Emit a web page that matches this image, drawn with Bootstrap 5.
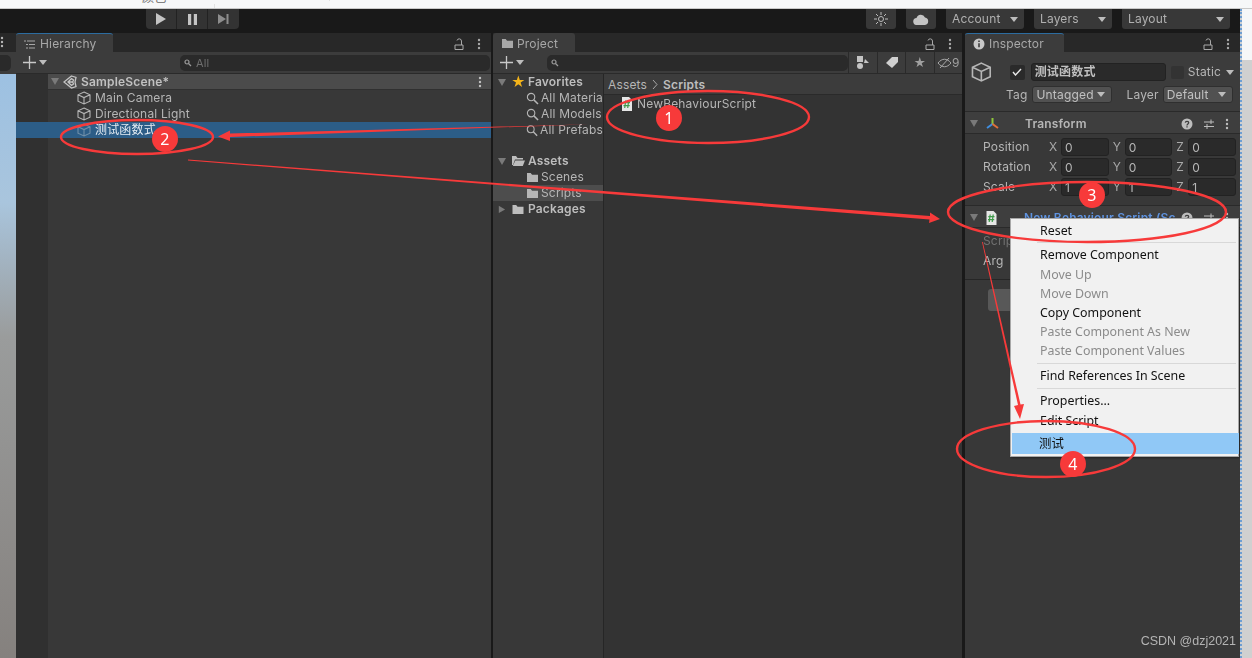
<!DOCTYPE html>
<html lang="en">
<head>
<meta charset="utf-8">
<title>Unity Editor</title>
<link href="https://cdn.jsdelivr.net/npm/bootstrap@5.3.0/dist/css/bootstrap.min.css" rel="stylesheet">
<style>
html,body{margin:0;height:100%;background:#191919;overflow:hidden}
.ue-app{width:1252px;height:658px;position:relative;overflow:hidden;font:12px/16px Inter,"Noto Sans CJK SC",sans-serif;letter-spacing:.17px;color:#b6b6b6;filter:blur(.45px)}
.ue-top{height:9px;background:#f6f7f8;border-bottom:1px solid #c8c8c8;overflow:hidden;color:#666;line-height:12px;padding-left:142px}
.ue-top span{display:block;margin-top:-8px;width:188px;height:9px;border-right:1px solid #e2e2e2}
.ue-top em{display:block;height:9px;width:73px;border-right:1px solid #e2e2e2}
.ue-bar{height:24px;background:#191919;padding-right:22px}
.ue-play{margin-left:146px;height:20px;background:#333;border-radius:0 0 4px 4px;display:flex}
.ue-play i{width:31px;display:flex;align-items:center;justify-content:center;border-right:1px solid #222}
.ue-tb{height:20px;background:#383838;border-radius:0 0 3px 3px;color:#b0b0b0;display:flex;align-items:center;padding:0 6px}
.ue-w30{width:30px;justify-content:center;margin-right:10px}
.ue-w78{width:78px;margin-right:10px}
.ue-w108{width:108px}
.caret-d{width:0;height:0;border:4px solid transparent;border-top:5px solid #bdbdbd;border-bottom:0;margin-left:auto;flex:none}
.caret-g{border-top-color:#7a7a7a;border-left-width:4.500px;border-right-width:4.500px;border-top-width:7px;margin:0}
.ue-panes{height:625px}
.ue-scene{width:16px;background:#282828}
.ue-scene-tab{height:19px;padding-top:3px}
.ue-scene-tool{height:22px;background:#3c3c3c;padding-top:3px}
.ue-scene-tool div{width:11px;height:16px;background:#2a2a2a;border-radius:0 5px 5px 0}
.ue-scene-view{flex:1;background:linear-gradient(#9dc1e2 0,#a9c5dd 22%,#9a9c9c 45%,#85817e 100%)}
.ue-hier{width:475px;margin-right:2px}
.ue-proj{width:469px;margin-right:3px}
.ue-insp{width:275px}
.ue-hier,.ue-proj,.ue-insp{background:#383838;display:flex;flex-direction:column}
.ue-tabs{height:19px;background:#282828;flex:none;color:#a8a8a8}
.ue-tab{height:19px;background:#3c3c3c;display:flex;align-items:center;padding-top:2px;border-radius:3px 3px 0 0}
.ue-tab.on{border-top:1px solid #2c6ca0}
.w97{width:97px;padding-left:8px;gap:5px}.w82{width:82px;padding-left:8px;gap:3px}.w99{width:99px;padding-left:8px;gap:4px}
.ue-tools{height:22px;background:#3c3c3c;flex:none;border-bottom:1px solid #2a2a2a;align-items:center}
.ue-plus{width:32px;padding-left:7px;display:flex;align-items:center;gap:3px;flex:none}
.ue-search{height:16px;background:#2a2a2a;border-radius:5px;display:flex;align-items:center;padding-left:4px;color:#6f6f6f;gap:4px;font-size:11px}
.ue-s1{margin-left:132px;width:310px}
.ue-s2{margin-left:22px;width:301px}
.ue-gutter{width:32px;background:#303030;flex:none}
.ue-row{height:16px;display:flex;align-items:center;white-space:nowrap}
.ue-scn{background:#4b4b4b;font-weight:600;color:#c0c0c0;padding-left:3px;gap:4px;border-bottom:1px solid #303030}
.ue-scn .dot-end{margin:0 9px 0 auto}
.ue-ind{padding-left:29px;gap:4px}
.ue-sel{background:#2c5d87;color:#e4ecf3;margin-left:-32px;padding-left:61px}
.ue-sel svg{color:#6f8ea8}
.ue-tree{width:111px;flex:none;border-right:1px solid #262626;overflow:hidden}
.ue-tree .ue-row{padding-left:5px}
.ue-tree .sub{padding-left:33px;gap:2px}
.ue-tree .act{background:#4d4d4d}
.ue-tree .ue-bold .ti{margin:0 3px 0 5px;flex:none}
.ue-tree .ue-pk .ti{margin:0 3px 0 4px}
.ue-bold{font-weight:600;color:#bdbdbd}
.ue-star{color:#f4b41a;font-size:14px;width:13px;margin:0 4px 0 5px;line-height:14px;letter-spacing:0}
.ue-tri{width:9px;font-size:8px;color:#7a7a7a;flex:none}
.ue-spacer{height:15px}
.ue-files{flex:1;background:#333}
.ue-crumb{height:21px;background:#3c3c3c;display:flex;align-items:center;padding:1px 0 0 4px;gap:5px;border-bottom:1px solid #2a2a2a}
.ue-file{padding-left:17px;height:18px;gap:4px;display:flex;align-items:center}
.ue-ic-btns{width:114px;display:flex;height:21px;flex:none}
.ue-ic-btns i{flex:1;display:flex;align-items:center;justify-content:center;border-left:1px solid #2a2a2a;font-style:normal;color:#a0a0a0}
.ue-head{height:60px;border-bottom:1px solid #2a2a2a;flex:none;background:#3c3c3c;position:relative}
.ue-r1{height:28px;padding-left:6px;margin-top:6px}
.ue-r2{height:17px;padding-left:41px}
.ue-fld{background:#2a2a2a;border-radius:3px;height:18px;border:1px solid #222;display:flex;align-items:center;padding-left:3px;color:#c0c0c0;font-weight:700;width:137px;margin:0 5px 0 1px}
.ue-chk{width:15px;height:15px;background:#2a2a2a;border-radius:2px;display:flex;align-items:center;justify-content:center;flex:none;margin:0 5px 0 18px}
.ue-chk2{width:13px;height:13px;background:#333;margin:0 4px 0 0}
.ue-static-car{margin:0 6px 0 5px}
.ue-drop{height:17px;background:#515151;border-radius:3px;display:flex;align-items:center;padding:0 6px 0 3px;color:#c0c0c0;border:1px solid #2f2f2f}
.ue-untag{width:80px}.ue-def{width:70px}
.ue-tag{margin-right:5px}
.ue-lay{margin:0 4px 0 14px}
.ue-h1{height:22px;padding:2px 0 0 5px;background:#3e3e3e;display:flex;align-items:center;border-bottom:1px solid #2a2a2a;flex:none}
.ue-h1 .ci{margin-left:7px}
.ue-h1 b{margin-left:25px;font-weight:600}
.ue-h1 b.ue-blue{margin-left:26px;color:#5f93e0}
.ue-h1-ic{margin-left:auto;display:flex;align-items:center;gap:10px;padding-right:11px;color:#bdbdbd}
.ue-gap4{height:3px}
.ue-gap3{height:3px}
.ue-end{height:9px;border-bottom:1px solid #2a2a2a}
.ue-prop{height:20px;display:flex;align-items:center;padding-left:18px}
.ue-prop>span:first-child{width:66px;flex:none}
.ue-dim{color:#727272}
.ue-ax{width:12px;flex:none;color:#a8a8a8}
.ue-num{width:48px;height:18px;background:#2a2a2a;border-radius:3px;border:1px solid #222;padding-left:3px;line-height:17px;margin-right:4px}
.ue-sep{height:1px;background:#262626;margin-top:8px}
.ue-fbtn{width:60px;height:22px;background:#585858;border-radius:3px;margin:9px 0 0 23px}
.ue-right{flex:1;background:#d0d0d0;border-left:2px dotted #6d9ed2;margin-top:-24px;position:relative}
.ue-right::before{content:"";position:absolute;top:0;left:0;right:0;height:51px;background:#f6f7f8}
.ue-menu{position:absolute;left:1010px;top:218px;width:229px;height:239px;margin:0;padding:0;background:#f1f1f1;border:1px solid #a8a8a8;border-radius:0;font:12.400px/19px "Noto Sans","Noto Sans CJK SC",sans-serif;letter-spacing:0;min-width:0;display:block;box-shadow:1px 1px 2px rgba(0,0,0,.4)}
.ue-menu .dropdown-item{padding:0 0 0 29px;color:#111;height:19.200px;line-height:19px;background:none}
.ue-menu .ue-first{margin-top:1.500px}
.ue-menu .dropdown-item.disabled{color:#8b8b8b}
.ue-menu .dropdown-divider{margin:2.400px 2px 2.400px 26px;border-color:#d8d8d8;opacity:1}
.ue-menu .dropdown-item.hot{background:#90c8f6;margin:3.500px 1px 0;padding-left:27px;height:21px;line-height:22px}
.ue-over{position:absolute;left:0;top:0;pointer-events:none;z-index:1001}
.ue-mark{position:absolute;right:16px;bottom:9px;color:#b4b4b4;font:12.500px/16px "Liberation Sans",sans-serif;letter-spacing:0;z-index:1002}
.ue-hicons{margin-left:auto;display:flex;gap:13px;padding-right:10px;align-items:center;height:19px;padding-top:2px}
</style>
</head>
<body>
<svg width="0" height="0" class="position-absolute">
<defs>
<symbol id="cube" viewBox="0 0 14 14"><path d="M7 1 13 3.800V10.200L7 13 1 10.200V3.800ZM1 3.800 7 6.600 13 3.800M7 6.600V13" fill="none" stroke="currentColor" stroke-width="1.100"/></symbol>
<symbol id="folder" viewBox="0 0 14 12"><path d="M1 1h4l1.500 2H13v8H1Z" fill="currentColor"/></symbol>
<symbol id="openf" viewBox="0 0 14 12"><path d="M1 1h4l1.500 2H12v1.500H4L2 10 1 10ZM4.300 5.500H14L11.800 11H1.800Z" fill="currentColor"/></symbol>
<symbol id="mag" viewBox="0 0 14 14"><circle cx="5.500" cy="5.500" r="4" fill="none" stroke="currentColor" stroke-width="1.200"/><path d="M8.500 8.500 13 13" stroke="currentColor" stroke-width="1.600"/></symbol>
<symbol id="lock" viewBox="0 0 10 12"><path d="M1 7h8v4.500H1ZM7.500 7V3a2.300 2.300 0 0 0-4.500-.5" fill="none" stroke="currentColor"/></symbol>
<symbol id="dots" viewBox="0 0 4 12"><circle cx="2" cy="2" r="1.200" fill="currentColor"/><circle cx="2" cy="6" r="1.200" fill="currentColor"/><circle cx="2" cy="10" r="1.200" fill="currentColor"/></symbol>
<symbol id="sliders" viewBox="0 0 12 12"><path d="M1 4h10M1 8.500h10M8 1.500V6M4 6v5" stroke="currentColor" fill="none"/></symbol>
<symbol id="help" viewBox="0 0 12 12"><circle cx="6" cy="6" r="5.500" fill="currentColor"/><path d="M4.300 4.600C4.500 2.800 7.800 3 7.700 4.800 7.600 6 6 6 6 7.400M6 8.300v1.300" stroke="#3e3e3e" stroke-width="1.300" fill="none"/></symbol>
<symbol id="plus" viewBox="0 0 13 13"><path d="M6.500 0v13M0 6.500h13" stroke="#c8c8c8" stroke-width="1.300"/></symbol>
<symbol id="unity" viewBox="0 0 14 14"><path d="M8.500 1 13 2.500 12 7 13 11.500 8.500 13 1 7ZM5 7 8.500 3.500 10.500 5 9.700 7 10.500 9 8.500 10.500ZM5 7H9.700" fill="none" stroke="#c4c4c4" stroke-width="1.300"/></symbol>
<symbol id="script" viewBox="0 0 12 14"><path d="M1 0h7l3 3v11H1Z" fill="#e6e6e6"/><path d="M4.700 3.500 3.700 11M7.700 3.500 6.700 11M2.800 5.700H9M2.500 8.700H8.700" stroke="#3f9a4a" stroke-width="1.200" fill="none"/></symbol>
<symbol id="axes" viewBox="0 0 14 14"><path d="M7 7V1" stroke="#8fc63d" stroke-width="2"/><path d="M7 7 1.500 11" stroke="#3f8ee0" stroke-width="2"/><path d="M7 7 12.500 11" stroke="#e0703a" stroke-width="2"/></symbol>
<symbol id="sr" viewBox="0 0 8 8"><circle cx="3" cy="3" r="2" fill="none" stroke="#9a9a9a" stroke-width="1.200"/><path d="M4.500 4.500 7 7" stroke="#9a9a9a" stroke-width="1.200"/></symbol>
</defs>
</svg>

<div class="ue-app d-flex flex-column">
  <div class="ue-top"><span>颜色<em></em></span></div>
  <div class="ue-bar d-flex align-items-start">
    <div class="ue-play">
      <i><svg width="10" height="12" viewBox="0 0 10 12"><path d="M0 0 10 6 0 12Z" fill="#c4c4c4"/></svg></i>
      <i><svg width="9" height="11" viewBox="0 0 9 11"><path d="M0 0h3.200v11H0ZM5.800 0H9v11H5.800Z" fill="#c4c4c4"/></svg></i>
      <i class="border-0"><svg width="11" height="10" viewBox="0 0 11 10"><path d="M0 0 8 5 0 10ZM8.500 0H10.500V10H8.500Z" fill="#8d8d8d"/></svg></i>
    </div>
    <div class="ue-tb ue-w30 ms-auto"><svg width="14" height="14" viewBox="0 0 14 14"><circle cx="7" cy="7" r="2.500" fill="none" stroke="#bdbdbd"/><path d="M7 0v3M7 11v3M0 7h3M11 7h3M2 2l2 2M10 10l2 2M2 12l2-2M10 4l2-2" stroke="#bdbdbd"/></svg></div>
    <div class="ue-tb ue-w30"><svg width="16" height="11" viewBox="0 0 16 11"><path d="M4 11a3.500 3.500 0 0 1-.5-7A4.500 4.500 0 0 1 12 3.500 3.800 3.800 0 0 1 12 11Z" fill="#c4c4c4"/></svg></div>
    <div class="ue-tb ue-w78">Account<span class="caret-d"></span></div>
    <div class="ue-tb ue-w78">Layers<span class="caret-d"></span></div>
    <div class="ue-tb ue-w108">Layout<span class="caret-d"></span></div>
  </div>
  <div class="ue-panes d-flex">
    <div class="ue-scene d-flex flex-column">
      <div class="ue-scene-tab"><svg width="4" height="12" class="d-block"><use href="#dots"/></svg></div>
      <div class="ue-scene-tool"><div></div></div>
      <div class="ue-scene-view"></div>
    </div>

    <section class="ue-hier">
      <div class="ue-tabs d-flex">
        <div class="ue-tab on w97"><svg width="11" height="9" viewBox="0 0 11 9"><path d="M0 1h2M3 1h8M2 4.500h2M5 4.500h6M2 8h2M5 8h6" stroke="#a8a8a8"/></svg>Hierarchy</div>
        <div class="ue-hicons"><svg width="10" height="12"><use href="#lock"/></svg><svg width="4" height="12"><use href="#dots"/></svg></div>
      </div>
      <div class="ue-tools d-flex">
        <div class="ue-plus"><svg width="13" height="13"><use href="#plus"/></svg><span class="caret-d m-0"></span></div>
        <div class="ue-search ue-s1"><svg width="8" height="8"><use href="#sr"/></svg>All</div>
      </div>
      <div class="d-flex flex-grow-1">
        <div class="ue-gutter"></div>
        <div class="flex-grow-1">
          <div class="ue-row ue-scn"><span class="caret-d caret-g"></span><svg width="14" height="14"><use href="#unity"/></svg><span>SampleScene*</span><svg width="4" height="12" class="dot-end"><use href="#dots"/></svg></div>
          <div class="ue-row ue-ind"><svg width="14" height="14"><use href="#cube"/></svg>Main Camera</div>
          <div class="ue-row ue-ind"><svg width="14" height="14"><use href="#cube"/></svg>Directional Light</div>
          <div class="ue-row ue-ind ue-sel"><svg width="14" height="14"><use href="#cube"/></svg>测试函数式</div>
        </div>
      </div>
    </section>

    <section class="ue-proj">
      <div class="ue-tabs d-flex">
        <div class="ue-tab w82"><svg width="13" height="11"><use href="#folder"/></svg>Project</div>
        <div class="ue-hicons"><svg width="10" height="12"><use href="#lock"/></svg><svg width="4" height="12"><use href="#dots"/></svg></div>
      </div>
      <div class="ue-tools d-flex">
        <div class="ue-plus"><svg width="13" height="13"><use href="#plus"/></svg><span class="caret-d m-0"></span></div>
        <div class="ue-search ue-s2"><svg width="8" height="8"><use href="#sr"/></svg></div>
        <div class="ue-ic-btns ms-auto">
          <i><svg width="13" height="13" viewBox="0 0 13 13"><path d="M1 0h6v6H1ZM9 3l4 4H8Z" fill="#c4c4c4"/><circle cx="4" cy="10" r="3" fill="#c4c4c4"/></svg></i>
          <i><svg width="13" height="11" viewBox="0 0 13 11"><path d="M7 0h6v5L7 11 1 6Z" fill="#d0d0d0"/></svg></i>
          <i>★</i>
          <i><svg width="15" height="10" viewBox="0 0 15 10"><path d="M1 5C5 0 10 0 14 5 10 10 5 10 1 5ZM12 0 3 10" stroke="#a8a8a8" fill="none"/></svg>9</i>
        </div>
      </div>
      <div class="d-flex flex-grow-1">
        <nav class="ue-tree">
          <div class="ue-row ue-bold"><span class="caret-d caret-g"></span><span class="ue-star">★</span>Favorites</div>
          <div class="ue-row sub"><svg width="13" height="13"><use href="#mag"/></svg>All Materia</div>
          <div class="ue-row sub"><svg width="13" height="13"><use href="#mag"/></svg>All Models</div>
          <div class="ue-row sub"><svg width="13" height="13"><use href="#mag"/></svg>All Prefabs</div>
          <div class="ue-spacer"></div>
          <div class="ue-row ue-bold"><span class="caret-d caret-g"></span><svg width="14" height="12" class="ti"><use href="#openf"/></svg>Assets</div>
          <div class="ue-row sub"><svg width="13" height="11"><use href="#folder"/></svg>Scenes</div>
          <div class="ue-row sub act"><svg width="13" height="11"><use href="#folder"/></svg>Scripts</div>
          <div class="ue-row ue-bold ue-pk"><span class="ue-tri">▶</span><svg width="14" height="11" class="ti"><use href="#folder"/></svg>Packages</div>
        </nav>
        <div class="ue-files">
          <div class="ue-crumb">Assets <svg width="6" height="9" viewBox="0 0 6 9"><path d="M1 0 5 4.500 1 9" fill="none" stroke="#a8a8a8"/></svg> <b class="ue-bold">Scripts</b></div>
          <div class="ue-file"><svg width="12" height="14"><use href="#script"/></svg>NewBehaviourScript</div>
        </div>
      </div>
    </section>

    <section class="ue-insp">
      <div class="ue-tabs d-flex">
        <div class="ue-tab on w99"><svg width="12" height="12" viewBox="0 0 12 12"><circle cx="6" cy="6" r="5.500" fill="#c8c8c8"/><path d="M6 2.500v1.500M6 5.300v4" stroke="#333" stroke-width="1.500"/></svg>Inspector</div>
        <div class="ue-hicons"><svg width="10" height="12"><use href="#lock"/></svg><svg width="4" height="12"><use href="#dots"/></svg></div>
      </div>
      <div class="ue-head d-flex flex-column">
        <div class="d-flex align-items-center ue-r1">
          <svg width="21" height="22"><use href="#cube"/></svg>
          <div class="ue-chk"><svg width="10" height="8" viewBox="0 0 10 8"><path d="M1 4 3.500 7 9 1" fill="none" stroke="#e8e8e8" stroke-width="1.400"/></svg></div>
          <div class="ue-fld">测试函数式</div>
          <div class="ue-chk ue-chk2"></div>
          <span>Static</span><span class="caret-d ue-static-car"></span>
        </div>
        <div class="d-flex align-items-center ue-r2">
          <span class="ue-tag">Tag</span>
          <div class="ue-drop ue-untag">Untagged<span class="caret-d"></span></div>
          <span class="ue-lay">Layer</span>
          <div class="ue-drop ue-def">Default<span class="caret-d"></span></div>
        </div>
      </div>
      <div class="ue-h1"><span class="caret-d caret-g"></span><svg width="15" height="14" class="ci"><use href="#axes"/></svg><b>Transform</b><span class="ue-h1-ic"><svg width="12" height="12"><use href="#help"/></svg><svg width="12" height="12"><use href="#sliders"/></svg><svg width="4" height="12"><use href="#dots"/></svg></span></div>
      <div class="ue-gap4"></div>
      <div class="ue-prop"><span>Position</span><span class="ue-ax">X</span><span class="ue-num">0</span><span class="ue-ax">Y</span><span class="ue-num">0</span><span class="ue-ax">Z</span><span class="ue-num">0</span></div>
      <div class="ue-prop"><span>Rotation</span><span class="ue-ax">X</span><span class="ue-num">0</span><span class="ue-ax">Y</span><span class="ue-num">0</span><span class="ue-ax">Z</span><span class="ue-num">0</span></div>
      <div class="ue-prop"><span>Scale</span><span class="ue-ax">X</span><span class="ue-num">1</span><span class="ue-ax">Y</span><span class="ue-num">1</span><span class="ue-ax">Z</span><span class="ue-num">1</span></div>
      <div class="ue-end"></div>
      <div class="ue-h1"><span class="caret-d caret-g"></span><svg width="13" height="14" class="ci"><use href="#script"/></svg><b class="ue-blue">New Behaviour Script (Sc</b><span class="ue-h1-ic"><svg width="12" height="12"><use href="#help"/></svg><svg width="12" height="12"><use href="#sliders"/></svg><svg width="4" height="12"><use href="#dots"/></svg></span></div>
      <div class="ue-gap3"></div>
      <div class="ue-prop"><span class="ue-dim">Script</span></div>
      <div class="ue-prop"><span>Arg</span></div>
      <div class="ue-sep"></div>
      <div class="ue-fbtn"></div>
    </section>
    <div class="ue-right"></div>
  </div>

  <div class="dropdown-menu show ue-menu" role="menu">
    <a class="dropdown-item ue-first">Reset</a>
    <hr class="dropdown-divider">
    <a class="dropdown-item">Remove Component</a>
    <a class="dropdown-item disabled">Move Up</a>
    <a class="dropdown-item disabled">Move Down</a>
    <a class="dropdown-item">Copy Component</a>
    <a class="dropdown-item disabled">Paste Component As New</a>
    <a class="dropdown-item disabled">Paste Component Values</a>
    <hr class="dropdown-divider">
    <a class="dropdown-item">Find References In Scene</a>
    <hr class="dropdown-divider">
    <a class="dropdown-item">Properties...</a>
    <a class="dropdown-item">Edit Script</a>
    <a class="dropdown-item hot">测试</a>
  </div>

  <svg class="ue-over" width="1252" height="658" viewBox="0 0 1252 658">
    <g fill="none" stroke="#f73a3a" stroke-width="2.400">
      <ellipse cx="708" cy="117" rx="101" ry="26"/>
      <ellipse cx="137" cy="137" rx="76" ry="17"/>
      <ellipse cx="1087" cy="212" rx="139" ry="30"/>
      <ellipse cx="1046" cy="449" rx="89" ry="28"/>
    </g>
    <g fill="#f73a3a">
      <path d="M590 124.300 230 133.500 230 130.500 218 136.500 230 141 230 137Z"/>
      <path d="M188 159.500 930 216 930 212.500 940 219 929 223 929.500 219.500 188 160.500Z"/>
      <path d="M982 242 1018 405 1014 406 1020 419 1024 404 1020.500 404.500 982.800 242Z"/>
      <circle cx="669" cy="118" r="13"/><circle cx="165" cy="139" r="13"/><circle cx="1092" cy="195" r="13"/><circle cx="1073" cy="464" r="13"/>
    </g>
    <g fill="#fff" font-family="Noto Sans, sans-serif" font-size="16" text-anchor="middle">
      <text x="669" y="124">1</text><text x="165" y="145">2</text><text x="1092" y="201">3</text><text x="1073" y="470">4</text>
    </g>
  </svg>
  <div class="ue-mark">CSDN @dzj2021</div>
</div>
<script src="https://cdn.jsdelivr.net/npm/bootstrap@5.3.0/dist/js/bootstrap.bundle.min.js"></script>
</body>
</html>
